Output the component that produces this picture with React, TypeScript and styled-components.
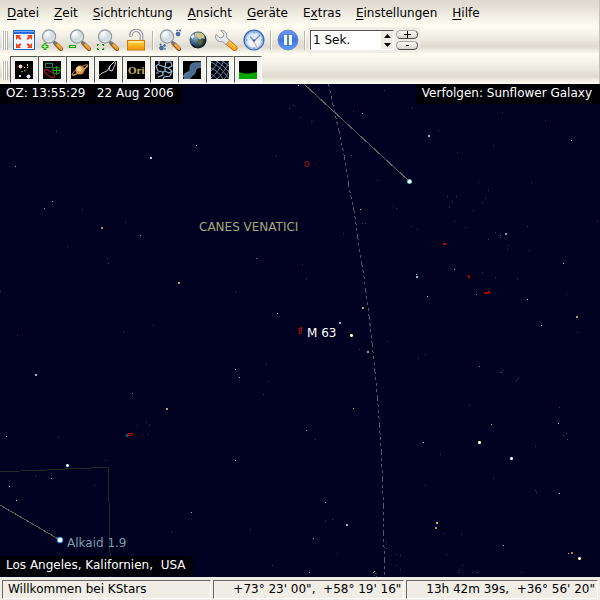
import React, { useState } from "react";
import styled, { createGlobalStyle } from "styled-components";

const GlobalStyle = createGlobalStyle`
  * { box-sizing: border-box; }
  body {
    margin: 0;
    font-family: "DejaVu Sans", sans-serif;
    font-size: 12px;
    line-height: 16px;
    color: #000;
  }
  button, input { font: inherit; color: inherit; }
`;

const Window = styled.div`
  display: flex;
  flex-direction: column;
  height: 100vh;
  background: #efede6;
`;

const Bars = styled.header`
  border-right: 1px solid #c4c1b8;
`;

const MenuBar = styled.nav`
  display: flex;
  gap: 3px;
  height: 26px;
  padding-left: 1px;
  background: linear-gradient(#dedad0, #e2ded4 20%, #fffcf1);
`;

const MenuItem = styled.button`
  padding: 0 6px;
  border: 0;
  background: none;
  white-space: nowrap;
  text-underline-offset: 2px;
`;

const ToolBar = styled.div<{ $tall?: boolean }>`
  display: flex;
  align-items: ${(p) => (p.$tall ? "flex-start" : "center")};
  height: ${(p) => (p.$tall ? 30 : 28)}px;
  padding-top: ${(p) => (p.$tall ? 2 : 0)}px;
  background: linear-gradient(
    #fffcf1,
    #f6f4eb 25%,
    #e9e5dc 55%,
    #dedacf 74%,
    #fffdf3
  );
`;

const Handle = styled.div`
  flex: none;
  align-self: center;
  width: 6px;
  height: 19px;
  margin: 0 2px;
  background: repeating-linear-gradient(90deg, #fff 0 1px, #bbb7ad 1px 2px);
`;

const Divider = styled.div`
  flex: none;
  width: 2px;
  height: 19px;
  margin: 0 2px;
  border-left: 1px solid #b9b5ab;
  border-right: 1px solid #fff;
`;

const ToolButton = styled.button`
  display: grid;
  flex: none;
  place-items: center;
  width: 28px;
  height: 28px;
  padding: 0;
  border: 0;
  background: none;
`;

const ToggleButton = styled(ToolButton)`
  height: 27px;
  padding-right: 1px;
  border-top: 1px solid #55534e;
  border-left: 1px solid #55534e;
  border-right: 1px solid #fff;
  border-bottom: 1px solid #fff;
  background: #f4f2ed;
  svg { background: #000; }
`;

const StepPanel = styled.div`
  display: flex;
  align-items: center;
  gap: 2px;
  height: 26px;
  padding: 0 2px;
  background: #efede6;
`;

const SpinBox = styled.div`
  display: flex;
  width: 84px;
  height: 20px;
  border: 1px solid #fff;
  border-top-color: #55534e;
  border-left-color: #55534e;
  background: #fff;
`;

const SpinInput = styled.input`
  width: 70px;
  padding: 0 2px;
  border: 0;
  outline: 0;
  background: #fff;
`;

const SpinArrows = styled.div`
  display: grid;
  flex: 1;
  background: #efede6;
`;

const ArrowButton = styled.button`
  display: grid;
  place-items: center;
  padding: 0;
  border: 0;
  background: none;
`;

const RoundButtons = styled.div`
  display: grid;
  gap: 2px;
`;

const RoundButton = styled.button`
  display: grid;
  place-items: center;
  width: 22px;
  height: 9px;
  padding: 0;
  border: 1px solid #aaa79f;
  border-right-color: #4b4944;
  border-bottom-color: #4b4944;
  border-radius: 5px;
  background: linear-gradient(#fbfaf5, #d9d5ca);
`;

const Sky = styled.main`
  position: relative;
  flex: 1;
  min-height: 0;
  overflow: hidden;
  background: #000020;
`;

const SkyChart = styled.svg`
  display: block;
  width: 100%;
  height: 100%;
`;

const InfoBox = styled.div<{ $place: "time" | "focus" | "location" }>`
  position: absolute;
  ${(p) => (p.$place === "focus" ? "right: 0;" : "left: 0;")}
  ${(p) => (p.$place === "location" ? "bottom: 1px;" : "top: 0;")}
  padding: 1px 8px 3px 6px;
  color: #fff;
  white-space: pre;
  background: repeating-conic-gradient(#000 0 25%, #00000c 0 50%) 0 0 / 2px 2px;
`;

const StatusBar = styled.footer`
  display: flex;
  gap: 2px;
  height: 23px;
  padding: 3px 2px 1px;
`;

const StatusCell = styled.div<{ $grow: number; $end?: boolean }>`
  flex: ${(p) => p.$grow} 1 0;
  min-width: 0;
  padding: 0 2px 0 5px;
  border: 1px solid #fff;
  border-top-color: #6a6862;
  border-left-color: #6a6862;
  text-align: ${(p) => (p.$end ? "right" : "left")};
  white-space: pre;
  overflow: hidden;
`;

const menus: [string, string, string][] = [
  ["", "D", "atei"],
  ["", "Z", "eit"],
  ["", "S", "ichtrichtung"],
  ["", "A", "nsicht"],
  ["", "G", "eräte"],
  ["E", "x", "tras"],
  ["", "E", "instellungen"],
  ["", "H", "ilfe"],
];

/* ---------- tool icons ---------- */

const FullScreenIcon = () => (
  <svg width="22" height="22" viewBox="0 0 22 22">
    <rect x="0.5" y="1.5" width="21" height="19" fill="#f4f6fb" stroke="#2a62c8" />
    <rect x="0" y="1" width="22" height="4" fill="#2b6cdb" />
    <rect x="1" y="2" width="20" height="1" fill="#79a8f3" />
    <g fill="#e8471c">
      <path d="M3 6h5l-1.500 1.500 2 2-1.500 1.500-2-2L3 11z" />
      <path d="M19 6h-5l1.500 1.500-2 2 1.500 1.500 2-2L19 11z" />
      <path d="M3 19h5l-1.500-1.500 2-2-1.500-1.500-2 2L3 14z" />
      <path d="M19 19h-5l1.500-1.500-2-2 1.500-1.500 2 2L19 14z" />
    </g>
  </svg>
);

const Lens = () => (
  <>
    <defs>
      <radialGradient id="glass" cx="35%" cy="30%" r="75%">
        <stop offset="0" stopColor="#fbfdfe" />
        <stop offset="0.6" stopColor="#cfd9de" />
        <stop offset="1" stopColor="#e9eff1" />
      </radialGradient>
    </defs>
    <path d="M14.500 14.500 20 20" stroke="#8a4b10" strokeWidth="4" strokeLinecap="round" />
    <path d="M15 14.500 20 19.500" stroke="#f2a63a" strokeWidth="2.500" strokeLinecap="round" />
    <path d="M12.500 12.500l3 3" stroke="#777" strokeWidth="3" />
    <circle cx="8" cy="7.500" r="6.600" fill="url(#glass)" stroke="#8e979b" strokeWidth="1.200" />
    <path d="M4 7a4.500 4.500 0 0 1 4-4" stroke="#fff" strokeWidth="1.500" fill="none" />
  </>
);

const ZoomInIcon = () => (
  <svg width="22" height="22" viewBox="0 0 22 22">
    <Lens />
    <path d="M3 14.500h2v2h2v2H5v2H3v-2H1v-2h2z" fill="#b4ff9a" stroke="#12a012" />
  </svg>
);

const ZoomOutIcon = () => (
  <svg width="22" height="22" viewBox="0 0 22 22">
    <Lens />
    <rect x="0.500" y="16.500" width="6" height="2" fill="#b4ff9a" stroke="#12a012" />
  </svg>
);

const ZoomBoxIcon = () => (
  <svg width="22" height="22" viewBox="0 0 22 22">
    <Lens />
    <path d="M0.500 17v-1.500H2M5 15.500h1.500V17M6.500 19v1.500H5M2 20.500H0.500V19" fill="none" stroke="#0a8a0a" strokeWidth="1.200" />
  </svg>
);

const LockIcon = () => (
  <svg width="22" height="22" viewBox="0 0 22 22">
    <defs>
      <linearGradient id="brass" x1="0" y1="0" x2="0" y2="1">
        <stop offset="0" stopColor="#ffe08a" />
        <stop offset="0.35" stopColor="#ffc42e" />
        <stop offset="1" stopColor="#f08c00" />
      </linearGradient>
    </defs>
    <path d="M6 7.500C5 -0.500 16.500 -0.500 16.500 6.500V12" fill="none" stroke="#7e7e7e" strokeWidth="3.500" />
    <path d="M6 7C5.500 -0.500 16.500 -0.500 16.500 6.500V12" fill="none" stroke="#f0f0f0" strokeWidth="1.800" />
    <rect x="2.500" y="11.500" width="17" height="9.500" fill="url(#brass)" stroke="#c87d08" />
    <path d="M4 13h14" stroke="#fff1b5" />
  </svg>
);

const FindIcon = () => (
  <svg width="22" height="22" viewBox="0 0 22 22">
    <Lens />
    <g fill="#3f6fb4" stroke="#22477f" strokeWidth="0.500">
      <circle cx="19" cy="5" r="2" />
      <circle cx="21" cy="1.500" r="0.800" />
      <circle cx="18" cy="1.500" r="0.600" />
      <circle cx="2.500" cy="19" r="2" />
      <circle cx="5.500" cy="16.500" r="1" />
      <circle cx="1.500" cy="15.500" r="0.700" />
      <circle cx="6" cy="20" r="0.600" />
    </g>
  </svg>
);

const GlobeIcon = () => (
  <svg width="22" height="22" viewBox="0 0 22 22">
    <defs>
      <radialGradient id="earth" cx="35%" cy="35%" r="70%">
        <stop offset="0" stopColor="#8fb7d6" />
        <stop offset="0.500" stopColor="#39617f" />
        <stop offset="1" stopColor="#0b141d" />
      </radialGradient>
    </defs>
    <circle cx="11" cy="11" r="8.500" fill="url(#earth)" />
    <path d="M8 4c3-1 7-1 9 2l1 4-3-1-2 2-3-3-2-1z" fill="#c9c68c" />
    <path d="M11 10l4 1 1 2-3 4-2-3z" fill="#5d6a35" />
    <path d="M3.500 8l3-3 1 2-2 3z" fill="#e8eef2" />
    <path d="M4 15l3 1 2 3c-2 0-4-2-5-4z" fill="#101820" />
  </svg>
);

const WrenchIcon = () => (
  <svg width="24" height="22" viewBox="0 0 24 22">
    <path d="M13 12.500l7.500 6.500" stroke="#c56c05" strokeWidth="6" strokeLinecap="round" />
    <path d="M13 12.500l7.500 6.300" stroke="#ffad2c" strokeWidth="4.500" strokeLinecap="round" />
    <path d="M13.500 11.500l7 5.500" stroke="#ffdf8c" strokeWidth="1" />
    <path
      d="M2 5.500c-2 4 2 8.500 6.500 7l3.500 3 3.500-4-3-3.500c1-4-2-7.500-6-6.500l3.500 3.500-1 3-3 1z"
      fill="#e6e8ea"
      stroke="#8b8e92"
      strokeWidth="0.900"
    />
  </svg>
);

const ClockIcon = () => (
  <svg width="22" height="22" viewBox="0 0 22 22">
    <defs>
      <radialGradient id="dial" cx="50%" cy="60%" r="60%">
        <stop offset="0" stopColor="#fff" />
        <stop offset="0.700" stopColor="#d3e5fa" />
        <stop offset="1" stopColor="#8db8ec" />
      </radialGradient>
    </defs>
    <circle cx="11" cy="11" r="9.900" fill="url(#dial)" stroke="#3c6fb8" strokeWidth="1.400" />
    <circle cx="11" cy="11" r="8.500" fill="none" stroke="#87aee0" />
    <path d="M11 12L7 7.500M11 12l6-6" stroke="#6b90c2" strokeWidth="1.200" />
    <path d="M10 11l4 7.500" stroke="#f3a49a" strokeWidth="1.300" />
    <circle cx="11" cy="11.500" r="1.200" fill="#34609d" />
    <path d="M11 3v1.500M11 18v1.500M3 11h1.500M18 11h1.500" stroke="#5b86bf" />
  </svg>
);

const PauseIcon = () => (
  <svg width="22" height="22" viewBox="0 0 22 22">
    <defs>
      <linearGradient id="disc" x1="0" y1="0" x2="0" y2="1">
        <stop offset="0" stopColor="#6d9bee" />
        <stop offset="0.500" stopColor="#3c74e6" />
        <stop offset="1" stopColor="#5f9bff" />
      </linearGradient>
    </defs>
    <circle cx="11" cy="11" r="10" fill="url(#disc)" stroke="#6d87c2" />
    <rect x="7" y="6" width="3" height="10" fill="#fff" />
    <rect x="12" y="6" width="3" height="10" fill="#fff" />
  </svg>
);

/* ---------- view toggles ---------- */

const StarsIcon = () => (
  <svg width="18" height="18" viewBox="0 0 18 18">
    <path d="M3 5.500h5M5.500 3v5" stroke="#d04848" />
    <rect x="4" y="4" width="3" height="3" fill="#ffd0d0" />
    <path d="M11 15.500h5M13.500 13v5" stroke="#5a80d0" />
    <rect x="12" y="14" width="3" height="3" fill="#dce8ff" />
    <path d="M6 11l6-2" stroke="#aaa" strokeDasharray="2 1" />
    <g fill="#ddd">
      <rect x="12" y="3" width="1" height="2" />
      <rect x="9" y="6" width="1" height="1" />
      <rect x="4" y="14" width="2" height="2" />
      <rect x="12" y="6" width="1" height="1" />
    </g>
  </svg>
);

const DeepSkyIcon = () => (
  <svg width="18" height="18" viewBox="0 0 18 18" fill="none">
    <rect x="2.500" y="2.500" width="7" height="4" stroke="#1f7d58" />
    <ellipse cx="6.500" cy="12.500" rx="5.800" ry="2.300" transform="rotate(35 6.500 12.500)" stroke="#c01818" />
    <circle cx="13.500" cy="9.500" r="3.500" stroke="#15a015" />
    <path d="M13.500 5v9M9 9.500h9" stroke="#15a015" />
  </svg>
);

const PlanetIcon = () => (
  <svg width="18" height="18" viewBox="0 0 18 18">
    <ellipse cx="9" cy="9" rx="9" ry="2" transform="rotate(-32 9 9)" fill="none" stroke="#b78335" strokeWidth="1.200" />
    <circle cx="9" cy="9" r="4.500" fill="#d78a43" />
    <circle cx="8" cy="8" r="2.500" fill="#ffd9a0" />
    <path d="M1.500 14c3 0 11-4 15-9.500" fill="none" stroke="#e9b764" />
  </svg>
);

const LinesIcon = () => (
  <svg width="18" height="18" viewBox="0 0 18 18">
    <path d="M0 14.500l3-2.500 5-2 3-5 4-4 1.500-1M11 5l-1 4 3 1 3-6 .5-3" fill="none" stroke="#c9c9c9" />
  </svg>
);

const NamesIcon = () => (
  <svg width="18" height="18" viewBox="0 0 18 18">
    <text x="1" y="13" fontSize="11" fontWeight="700" fontFamily="'Liberation Serif', serif" fill="#c4b45c">Ori</text>
  </svg>
);

const BoundsIcon = () => (
  <svg width="18" height="18" viewBox="0 0 18 18">
    <path
      d="M4 0v3L1 5l2 5 5 1v3l-5 2M4 4l6 2 1-5h5l1 4-4 2-3-1v4l-3 2M13 7l4 3-2 5-6 1-1 2M10 10l4 2 3-2M1 12l3 0"
      fill="none"
      stroke="#8fb9d8"
      strokeWidth="1.200"
    />
  </svg>
);

const MilkyWayIcon = () => (
  <svg width="18" height="18" viewBox="0 0 18 18">
    <path d="M1 18c-1-4 0-7 4-7 3-1 0-6 3-8 3-3 6-1 10-2v6c-3 0-5 1-5 3 0 4-4 4-6 8z" fill="#4c6c8e" />
    <path d="M0 15c3 1 3-3 6-4" stroke="#5c7c9c" strokeWidth="2" fill="none" />
  </svg>
);

const GridIcon = () => (
  <svg width="18" height="18" viewBox="0 0 18 18">
    <path
      d="M0 1c6 3 12 8 18 17M5 0c5 3 9 6 13 11M11 0c3 2 5 3 7 5M0 7c5 2 9 6 12 11M0 13c3 1 4 3 6 5M7 0C5 4 3 7 0 10M13 0C10 6 5 13 0 17M18 1C15 8 11 13 6 18M18 9c-1 4-3 7-5 9"
      fill="none"
      stroke="#5f86b5"
    />
  </svg>
);

const HorizonIcon = () => (
  <svg width="18" height="18" viewBox="0 0 18 18">
    <path d="M0 11c5 2 13 2 18 0v7H0z" fill="#00a800" />
  </svg>
);

const toolGroups: [string, React.FC][][] = [
  [
    ["Vollbild", FullScreenIcon],
    ["Vergrößern", ZoomInIcon],
    ["Verkleinern", ZoomOutIcon],
    ["Ausschnitt", ZoomBoxIcon],
    ["Verfolgen", LockIcon],
  ],
  [
    ["Suchen", FindIcon],
    ["Standort", GlobeIcon],
    ["Einrichten", WrenchIcon],
    ["Uhrzeit", ClockIcon],
  ],
  [["Uhr anhalten", PauseIcon]],
];

const toggles: [string, React.FC][] = [
  ["Sterne", StarsIcon],
  ["Deep-Sky-Objekte", DeepSkyIcon],
  ["Planeten", PlanetIcon],
  ["Sternbildlinien", LinesIcon],
  ["Sternbildnamen", NamesIcon],
  ["Sternbildgrenzen", BoundsIcon],
  ["Milchstraße", MilkyWayIcon],
  ["Koordinatengitter", GridIcon],
  ["Horizont", HorizonIcon],
];

/* ---------- sky data: x, y pairs grouped by colour ---------- */

const faint: Record<string, number[][]> = {
  "#006655": [
    [56, 131], [82, 209], [125, 222], [67, 246], [107, 258], [108, 263], [0, 291],
    [293, 105], [289, 108], [300, 117], [311, 121], [313, 121], [384, 90], [412, 107],
    [353, 111], [276, 156], [351, 155], [377, 180], [393, 206], [396, 208], [362, 223],
    [365, 223], [343, 233], [411, 226], [417, 229], [302, 264], [306, 279],
    [502, 112], [545, 120], [438, 130], [493, 145], [457, 152], [478, 182], [531, 182],
    [488, 190], [485, 198], [482, 202], [447, 196], [456, 196], [452, 201], [449, 207],
    [473, 210], [454, 221], [465, 227], [495, 232], [500, 235], [500, 237], [527, 226],
    [597, 221], [488, 239], [508, 245], [507, 249], [529, 250], [482, 272], [495, 277],
    [517, 279], [566, 294], [153, 325], [123, 332], [17, 335], [146, 422], [149, 424],
    [137, 425], [147, 434], [58, 437], [105, 460], [35, 475], [126, 434], [127, 434],
    [126, 435], [127, 435], [126, 436], [127, 436], [235, 292], [359, 349], [387, 341],
    [266, 364], [268, 381], [263, 394], [315, 439], [577, 332], [425, 354], [418, 358],
    [502, 370], [500, 372], [501, 372], [518, 378], [516, 380], [469, 405], [559, 407],
    [566, 433], [563, 435], [567, 439], [535, 446], [440, 454], [493, 478], [425, 485],
    [535, 490], [536, 492], [94, 485], [171, 531], [325, 520], [332, 519], [250, 529],
    [337, 553], [272, 565], [386, 542], [386, 548], [396, 554], [396, 565], [374, 575],
    [375, 573], [376, 573], [376, 576], [444, 533], [461, 534], [446, 554], [400, 555],
    [400, 569], [462, 565], [459, 570], [458, 572], [472, 572], [477, 572], [521, 572],
  ],
  "#7cc8d0": [[52, 201], [298, 85], [416, 274], [309, 572]],
  "#a8c8dc": [[571, 140], [527, 299], [239, 377], [503, 545], [568, 553]],
  "#c8c8b8": [
    [196, 145], [427, 296], [563, 263], [277, 313], [235, 369], [235, 460], [541, 325],
    [558, 423], [559, 493], [9, 486],
  ],
  "#c8c880": [[362, 113], [360, 209], [6, 436], [353, 408], [491, 424], [423, 442], [16, 500], [325, 502]],
  "#d0a070": [[15, 166], [44, 208], [140, 235], [454, 269], [51, 478], [306, 430], [191, 512], [313, 538], [374, 571]],
  "#c86858": [[256, 258], [476, 294], [132, 393], [479, 366], [373, 572]],
};

const medium: [number, number, string][] = [
  [150, 157, "#c8c8e0"], [101, 227, "#c87070"], [178, 282, "#c89070"],
  [428, 135, "#70c8c8"], [505, 233, "#70a8d0"], [416, 276, "#70c8d8"],
  [35, 374, "#70c8c8"], [166, 408, "#c89070"], [362, 307, "#c89070"],
  [339, 322, "#60c8c8"], [367, 351, "#c89070"], [576, 316, "#c89070"],
  [346, 524, "#60c8d8"], [436, 522, "#b8c870"], [435, 527, "#c89070"],
  [571, 552, "#c87070"],
];

const bright: [number, number, string][] = [
  [66, 464, "#30a8b8"], [350, 334, "#80a860"], [478, 441, "#90b070"],
  [510, 457, "#30b0c0"], [578, 557, "#c07828"],
];

const Chart = () => (
  <SkyChart viewBox="0 84 600 493" preserveAspectRatio="xMinYMin slice" role="img" aria-label="Sternkarte">
    <g fill="none" shapeRendering="crispEdges">
      <path d="M304 84L409 181M0 505L60 540" stroke="#626258" />
      <path d="M0 471.500L21 471L47 470L65 469L91 468L108 467.500L108.500 479L109.500 525L110.500 577" stroke="#282822" />
      <path
        d="M328.500 84L334.500 112L340.500 137L345.500 163L349.500 190L354.500 213L358.500 243L364.500 280L369.500 320L372.500 347L375.500 377L378.500 410L380.500 440L382.500 475L383.500 515L384.500 577"
        stroke="#4c5a6c"
        strokeDasharray="3 3 3 3 3 3 6 3"
      />
    </g>
    <g shapeRendering="crispEdges">
      {Object.entries(faint).map(([color, points]) => (
        <path key={color} fill={color} d={points.map(([x, y]) => `M${x} ${y}h1v1h-1z`).join("")} />
      ))}
      {medium.map(([x, y, color]) => (
        <rect key={`${x}-${y}`} x={x} y={y} width="2" height="2" fill={color} />
      ))}
      {bright.map(([x, y, color]) => (
        <g key={`${x}-${y}`}>
          <rect x={x} y={y} width="3" height="3" fill={color} />
          <path d={`M${x + 1} ${y}h1v1h1v1h-1v1h-1v-1h-1v-1h1z`} fill="#f4ffff" />
        </g>
      ))}
      <g fill="#b80000">
        <path d="M306 161h2v1h1v4h-1v1h-2v-1h-1v-4h1zM306 162v4h2v-4z" fillRule="evenodd" />
        <path d="M300 327h2v6h-1v1h-2v-6h1zM300 329v4h1v-4z" fillRule="evenodd" />
        <rect x="443" y="243" width="3" height="2" />
        <path d="M467 275h2v1h1v2h-2v-2h-1z" />
        <path d="M488 291h2v2h-1v1h-5v-1h1v-1h3z" />
        <path d="M128 433h5v2h-2v1h-3zM129 434v1h2v-1z" fillRule="evenodd" />
      </g>
    </g>
    <circle cx="409.500" cy="181.500" r="2.500" fill="#38c0c8" />
    <circle cx="409.500" cy="181.500" r="1.800" fill="#fff" />
    <circle cx="60" cy="540" r="3.200" fill="#3098d8" />
    <circle cx="60" cy="540" r="2.300" fill="#fff" />
    <text x="199" y="231" fill="#a8a878">CANES VENATICI</text>
    <text x="307" y="337" fill="#fff">M 63</text>
    <text x="67" y="547" fill="#78a0a8">Alkaid 1.9</text>
  </SkyChart>
);

export default function App() {
  const [step, setStep] = useState("1 Sek.");
  return (
    <Window>
      <GlobalStyle />
      <Bars>
        <MenuBar>
          {menus.map(([before, key, after]) => (
            <MenuItem key={before + key + after}>
              {before}
              <u>{key}</u>
              {after}
            </MenuItem>
          ))}
        </MenuBar>
        <ToolBar>
          <Handle />
          {toolGroups.map((group, i) => (
            <React.Fragment key={i}>
              {group.map(([label, Icon]) => (
                <ToolButton key={label} aria-label={label}>
                  <Icon />
                </ToolButton>
              ))}
              <Divider />
            </React.Fragment>
          ))}
          <StepPanel>
            <SpinBox>
              <SpinInput aria-label="Zeitschritt" value={step} onChange={(e) => setStep(e.target.value)} />
              <SpinArrows>
                <ArrowButton aria-label="Mehr">
                  <svg width="7" height="4" viewBox="0 0 7 4"><path d="M0 4L3.500 0L7 4z" /></svg>
                </ArrowButton>
                <ArrowButton aria-label="Weniger">
                  <svg width="7" height="4" viewBox="0 0 7 4"><path d="M0 0L3.500 4L7 0z" /></svg>
                </ArrowButton>
              </SpinArrows>
            </SpinBox>
            <RoundButtons>
              <RoundButton aria-label="Größere Einheit">
                <svg width="7" height="7" viewBox="0 0 7 7"><path d="M3 0h1v3h3v1H4v3H3V4H0V3h3z" /></svg>
              </RoundButton>
              <RoundButton aria-label="Kleinere Einheit">
                <svg width="7" height="7" viewBox="0 0 7 7"><path d="M2 3h3v1H2z" /></svg>
              </RoundButton>
            </RoundButtons>
          </StepPanel>
        </ToolBar>
        <ToolBar $tall>
          <Handle />
          {toggles.map(([label, Icon]) => (
            <ToggleButton key={label} aria-label={label} aria-pressed="true">
              <Icon />
            </ToggleButton>
          ))}
        </ToolBar>
      </Bars>
      <Sky>
        <Chart />
        <InfoBox $place="time">{"OZ: 13:55:29   22 Aug 2006"}</InfoBox>
        <InfoBox $place="focus">Verfolgen: Sunflower Galaxy</InfoBox>
        <InfoBox $place="location">{"Los Angeles, Kalifornien,  USA"}</InfoBox>
      </Sky>
      <StatusBar>
        <StatusCell $grow={209}>Willkommen bei KStars</StatusCell>
        <StatusCell $grow={191} $end>{"+73° 23' 00\",  +58° 19' 16\""}</StatusCell>
        <StatusCell $grow={191} $end>{"13h 42m 39s,  +36° 56' 20\""}</StatusCell>
      </StatusBar>
    </Window>
  );
}
